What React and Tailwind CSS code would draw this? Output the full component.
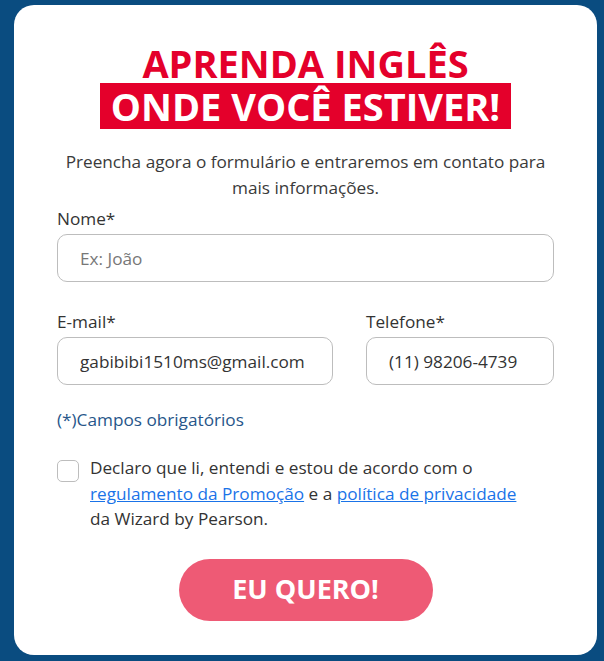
export default function App() {
  const font = { fontFamily: '"Open Sans", "Noto Sans", sans-serif' };
  return (
    <div className="w-full h-[661px] bg-[#0a4c80] pl-[14px] pr-[7px] pt-[5px] overflow-hidden" style={font}>
      <div className="bg-white rounded-[20px] h-[650px] px-[43px] pt-[38px]">
        <h1 className="text-center font-bold text-[38px] text-[#e4002b]">
          <div className="leading-[40px]">APRENDA INGLÊS</div>
          <div className="leading-[46px] h-[46px]">
            <span className="inline-block bg-[#e4002b] text-white px-[11px] h-[46px]">ONDE VOCÊ ESTIVER!</span>
          </div>
        </h1>
        <p className="mt-[20px] px-[6px] text-center text-[17.2px] leading-[26px] text-[#3a3a3a]">
          Preencha agora o formulário e entraremos em contato para mais informações.
        </p>
        <label className="block mt-[6px] text-[17.2px] leading-[24px] text-[#333]">Nome*</label>
        <input
          className="mt-[3px] w-full h-[48px] rounded-[10px] border border-[#bdbdbd] px-[22px] text-[17.2px] text-[#333] placeholder:text-[#777] outline-none"
          placeholder="Ex: João"
        />
        <div className="mt-[28px] flex gap-[33px]">
          <div className="w-[276px]">
            <label className="block text-[17.2px] leading-[24px] text-[#333]">E-mail*</label>
            <input
              className="mt-[3px] w-full h-[48px] rounded-[10px] border border-[#bdbdbd] px-[22px] text-[17.2px] text-[#333] outline-none"
              defaultValue="gabibibi1510ms@gmail.com"
            />
          </div>
          <div className="flex-1">
            <label className="block text-[17.2px] leading-[24px] text-[#333]">Telefone*</label>
            <input
              className="mt-[3px] w-full h-[48px] rounded-[10px] border border-[#bdbdbd] px-[22px] text-[17.2px] text-[#333] outline-none"
              defaultValue="(11) 98206-4739"
            />
          </div>
        </div>
        <p className="mt-[23px] text-[17.2px] leading-[24px] text-[#27568a]">(*)Campos obrigatórios</p>
        <div className="mt-[23px] flex gap-[11px]">
          <div className="w-[22px] h-[22px] mt-[5px] shrink-0 rounded-[5px] border border-[#bdbdbd]"></div>
          <p className="text-[17.2px] leading-[25.5px] text-[#333]">
            Declaro que li, entendi e estou de acordo com o
            <br />
            <a className="text-[#1a73e8] underline">regulamento da Promoção</a> e a{" "}
            <a className="text-[#1a73e8] underline">política de privacidade</a>
            <br />
            da Wizard by Pearson.
          </p>
        </div>
        <div className="mt-[27px] flex justify-center">
          <button className="w-[254px] h-[62px] rounded-full bg-[#ee5a75] text-white font-bold text-[27px]">
            EU QUERO!
          </button>
        </div>
      </div>
    </div>
  );
}
